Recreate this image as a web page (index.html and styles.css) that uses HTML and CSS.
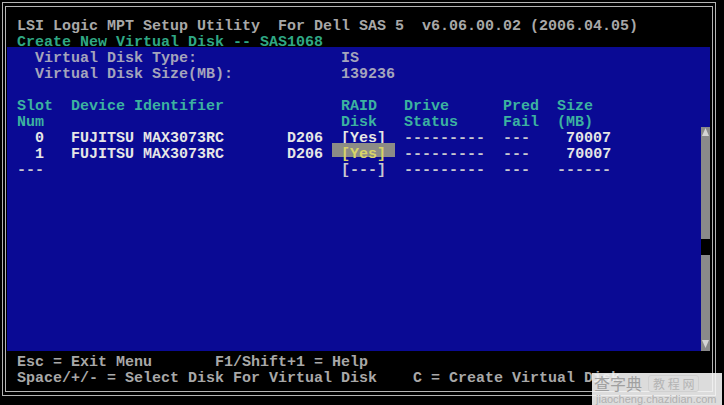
FILE: index.html
```html
<!DOCTYPE html>
<html>
<head>
<meta charset="utf-8">
<title>LSI Logic MPT Setup Utility</title>
<link rel="stylesheet" href="styles.css">
</head>
<body>
<div class="screen">
  <div class="frame">
    <div class="frame-inner">
      <div class="pad"></div>
      <div class="row t-gray"> LSI Logic MPT Setup Utility  For Dell SAS 5  v6.06.00.02 (2006.04.05)</div>
      <div class="row t-green"> Create New Virtual Disk -- SAS1068</div>
      <div class="panel">
        <div class="panel-body">
          <div class="row t-lav">   Virtual Disk Type:                IS</div>
          <div class="row t-lav">   Virtual Disk Size(MB):            139236</div>
          <div class="row"></div>
          <div class="row t-teal"> Slot  Device Identifier             RAID   Drive      Pred  Size</div>
          <div class="row t-teal"> Num                                 Disk   Status     Fail  (MB)</div>
          <div class="row t-white">   0   FUJITSU MAX3073RC       D206  [Yes]  <span class="t-dash">---------  ---</span>    70007</div>
          <div class="row t-white">   1   FUJITSU MAX3073RC       D206 <span class="hl"> [Yes] </span> <span class="t-dash">---------  ---</span>    70007</div>
          <div class="row t-dash"> ---                                 [---]  ---------  ---   ------</div>
          <div class="row"></div>
          <div class="row"></div>
          <div class="row"></div>
          <div class="row"></div>
          <div class="row"></div>
          <div class="row"></div>
          <div class="row"></div>
          <div class="row"></div>
          <div class="row"></div>
          <div class="row"></div>
          <div class="row"></div>
        </div>
        <div class="scroll">
          <div class="sb-cell"><svg width="9" height="16" viewBox="0 0 9 16"><polygon points="4.5,1 8,9 1,9" fill="#d4d4d4"/></svg></div>
          <div class="sb-cell"></div>
          <div class="sb-cell"></div>
          <div class="sb-cell"></div>
          <div class="sb-cell"></div>
          <div class="sb-cell"></div>
          <div class="sb-cell"></div>
          <div class="sb-cell sb-thumb"></div>
          <div class="sb-cell"></div>
          <div class="sb-cell"></div>
          <div class="sb-cell"></div>
          <div class="sb-cell"></div>
          <div class="sb-cell"></div>
          <div class="sb-cell"><svg width="9" height="16" viewBox="0 0 9 16"><polygon points="1,5 8,5 4.5,13" fill="#d4d4d4"/></svg></div>
        </div>
      </div>
      <div class="row t-gray"> Esc = Exit Menu       F1/Shift+1 = Help</div>
      <div class="row t-gray"> Space/+/- = Select Disk For Virtual Disk    C = Create Virtual Disk</div>
      <div class="pad"></div>
    </div>
  </div>
  <div class="watermark">
    <div class="wm-top">
      <span class="wm-logo">查字典</span>
      <span class="wm-box">教 程 网</span>
    </div>
    <div class="wm-url">jiaocheng.chazidian.com</div>
  </div>
</div>
</body>
</html>
```
FILE: styles.css
```css
html, body {
  margin: 0;
  padding: 0;
  background: #000;
}

.screen {
  position: relative;
  width: 724px;
  height: 405px;
  box-sizing: border-box;
  padding: 2px 0 0 2px;
  background: #000;
  overflow: hidden;
  font-family: "Liberation Mono", "DejaVu Sans Mono", monospace;
  font-size: 15px;
  font-weight: bold;
}

.frame {
  width: 714px;
  box-sizing: border-box;
  border: 1px solid #b4b4b4;
  padding: 3px 2px;
}

.frame-inner {
  border: 1px solid #b4b4b4;
  padding: 0 2px;
}

.pad {
  height: 8px;
}

.row {
  height: 16px;
  line-height: 23px;
  white-space: pre;
  color: #a8a8a8;
}

.t-gray { color: #a8a8a8; }
.t-green { color: #2fa884; }
.t-lav { color: #a4a4bc; }
.t-teal { color: #3cb2a0; }
.t-white { color: #e6e6e6; }
.t-dash { color: #c8c8d0; }

.hl {
  display: inline-block;
  height: 14px;
  background: #8c8c86;
  color: #d8d468;
}

.panel {
  display: flex;
  height: 304px;
  margin-left: -1px;
  padding-left: 1px;
  background: #0a0a94;
}

.panel-body {
  width: 693px;
}

.scroll {
  width: 9px;
  margin-top: 80px;
  display: flex;
  flex-direction: column;
  background: #8a8a8a;
}

.sb-cell {
  height: 16px;
}

.sb-cell svg {
  display: block;
}

.sb-thumb {
  background: #000;
}

.watermark {
  position: absolute;
  left: 592px;
  top: 373px;
  width: 130px;
  height: 32px;
  background: rgba(244, 244, 244, 0.9);
  font-family: "Noto Sans CJK SC", "Noto Sans", sans-serif;
  font-weight: normal;
  color: #9a9a9a;
}

.wm-top {
  display: flex;
  align-items: center;
  gap: 6px;
  height: 20px;
  padding-left: 2px;
}

.wm-logo {
  font-size: 16px;
  line-height: 20px;
  color: #a0a0a0;
}

.wm-box {
  font-size: 12px;
  line-height: 15px;
  padding: 0 4px;
  border: 1px solid #d0d0d0;
  border-radius: 3px;
  color: #b4b4b4;
}

.wm-url {
  margin-top: 1px;
  font-family: "Liberation Sans", sans-serif;
  font-size: 11px;
  line-height: 11px;
  padding-left: 4px;
  color: #b0b0b0;
}
```
